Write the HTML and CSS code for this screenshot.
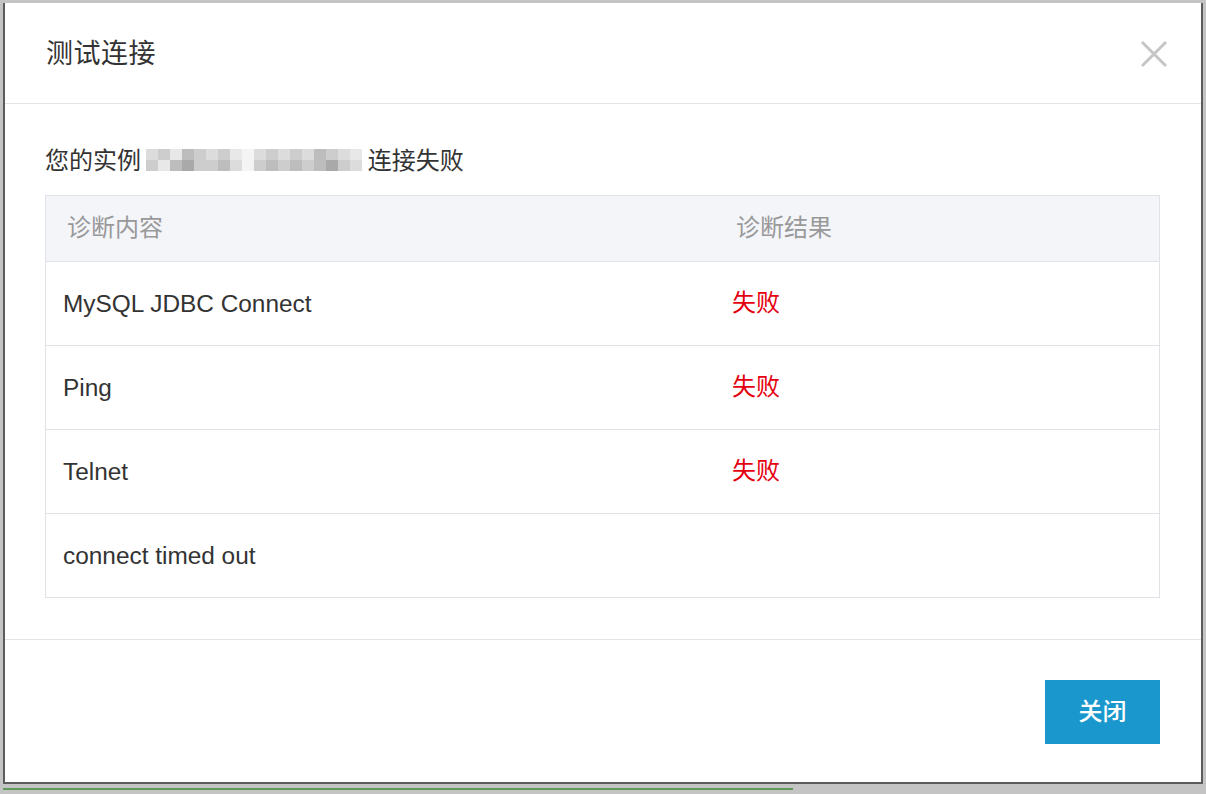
FILE: index.html
```html
<!DOCTYPE html>
<html lang="zh-CN">
<head>
<meta charset="utf-8">
<title>测试连接</title>
<link rel="stylesheet" href="styles.css">
</head>
<body>
<div class="dialog">
  <div class="dlg-header">
    <h1 class="dlg-title">测试连接</h1>
    <span class="dlg-close" aria-label="关闭">
      <svg width="28" height="28" viewBox="0 0 28 28"><path d="M2 2 L26 26 M26 2 L2 26" stroke="#c6c6c6" stroke-width="3" fill="none"/></svg>
    </span>
  </div>
  <div class="dlg-body">
    <p class="msg">您的实例 <span class="mosaic">
      <i class="c4"></i><i class="c3"></i><i class="c5"></i><i class="c2"></i><i class="c3"></i><i class="c4"></i><i class="c3"></i><i class="c5"></i><i class="c0"></i><i class="c4"></i><i class="c3"></i><i class="c4"></i><i class="c3"></i><i class="c4"></i><i class="c2"></i><i class="c3"></i><i class="c4"></i><i class="c5"></i>
      <i class="c3"></i><i class="c5"></i><i class="c2"></i><i class="c1"></i><i class="c3"></i><i class="c3"></i><i class="c2"></i><i class="c4"></i><i class="c0"></i><i class="c3"></i><i class="c2"></i><i class="c3"></i><i class="c2"></i><i class="c3"></i><i class="c2"></i><i class="c1"></i><i class="c3"></i><i class="c4"></i>
    </span> 连接失败</p>
    <div class="table">
      <div class="tr th">
        <div class="td col1"><span class="cjk-shift">诊断内容</span></div>
        <div class="td col2"><span class="cjk-shift">诊断结果</span></div>
      </div>
      <div class="tr">
        <div class="td col1 latin">MySQL JDBC Connect</div>
        <div class="td col2 fail"><span class="cjk-shift">失败</span></div>
      </div>
      <div class="tr">
        <div class="td col1 latin">Ping</div>
        <div class="td col2 fail"><span class="cjk-shift">失败</span></div>
      </div>
      <div class="tr">
        <div class="td col1 latin">Telnet</div>
        <div class="td col2 fail"><span class="cjk-shift">失败</span></div>
      </div>
      <div class="tr">
        <div class="td col1 latin">connect timed out</div>
        <div class="td col2"></div>
      </div>
    </div>
  </div>
  <div class="dlg-footer">
    <button class="btn-primary"><span class="cjk-shift">关闭</span></button>
  </div>
</div>
<div class="green-line"></div>
</body>
</html>
```

FILE: styles.css
```css
html, body {
  margin: 0;
  padding: 0;
}
body {
  background: #c4c4c4;
  width: 1206px;
  height: 794px;
  overflow: hidden;
  padding-top: 3px;
  box-sizing: border-box;
  font-family: "Liberation Sans", "Noto Sans CJK SC", sans-serif;
  color: #333;
}
.dialog {
  margin-left: 3px;
  width: 1200px;
  height: 781px;
  box-sizing: border-box;
  background: #fff;
  border-left: 2px solid #5c5c5c;
  border-right: 2px solid #5c5c5c;
  border-bottom: 2px solid #5c5c5c;
  display: flex;
  flex-direction: column;
}
.dlg-header {
  height: 100px;
  border-bottom: 1px solid #e4e4e4;
  display: flex;
  align-items: center;
  justify-content: space-between;
  padding: 0 33px 0 41px;
  flex: none;
}
.dlg-title {
  margin: 0;
  font-family: "Noto Sans CJK SC", sans-serif;
  font-weight: 400;
  font-size: 27px;
  color: #333;
  letter-spacing: 0.5px;
  position: relative;
  top: -2px;
}
.dlg-close {
  display: flex;
  width: 28px;
  height: 28px;
  margin-top: 2px;
}
.dlg-body {
  padding: 38px 41px 41px 40px;
  border-bottom: 1px solid #e4e4e4;
  flex: none;
}
.msg {
  margin: 0 0 19px 0;
  font-family: "Noto Sans CJK SC", sans-serif;
  font-size: 24px;
  line-height: 34px;
  height: 34px;
  color: #333;
  display: flex;
  align-items: center;
  white-space: pre;
}
.mosaic {
  display: inline-grid;
  grid-template-columns: repeat(18, 12px);
  grid-template-rows: 11px 11px;
  margin: 0 0 0 0;
  width: 216px;
  position: relative;
  top: 1px;
}
.mosaic i { display: block; }
.c0 { background: #f4f4f4; }
.c1 { background: #a9a9a9; }
.c2 { background: #bdbdbd; }
.c3 { background: #cdcdcd; }
.c4 { background: #dcdcdc; }
.c5 { background: #e8e8e8; }
.table {
  border: 1px solid #dfe2e7;
  width: 1115px;
  box-sizing: border-box;
}
.tr {
  display: flex;
  height: 84px;
  border-top: 1px solid #dfe2e7;
  box-sizing: border-box;
  align-items: center;
}
.tr.th {
  height: 65px;
  border-top: none;
  background: #f4f5f9;
  color: #999;
  font-family: "Noto Sans CJK SC", sans-serif;
  font-size: 24px;
}
.td {
  box-sizing: border-box;
  padding-left: 17px;
}
.th .td { padding-left: 21px; }
.col1 { width: 669px; }
.col2 { flex: 1; }
.cjk-shift {
  position: relative;
  top: -3px;
}
.latin {
  font-family: "Liberation Sans", sans-serif;
  font-size: 24.4px;
  color: #333;
}
.fail {
  font-family: "Noto Sans CJK SC", sans-serif;
  font-size: 24px;
  color: #e5000f;
}
.dlg-footer {
  flex: 1;
  display: flex;
  justify-content: flex-end;
  align-items: center;
  padding-right: 41px;
}
.btn-primary {
  width: 115px;
  height: 64px;
  border: none;
  background: #1a98cd;
  color: #fff;
  font-family: "Noto Sans CJK SC", sans-serif;
  font-size: 24px;
  font-weight: 500;
  padding: 0;
  margin-top: 2px;
}
.green-line {
  margin-top: 4px;
  margin-left: 3px;
  width: 790px;
  height: 2px;
  background: #5e9a5a;
}
```
